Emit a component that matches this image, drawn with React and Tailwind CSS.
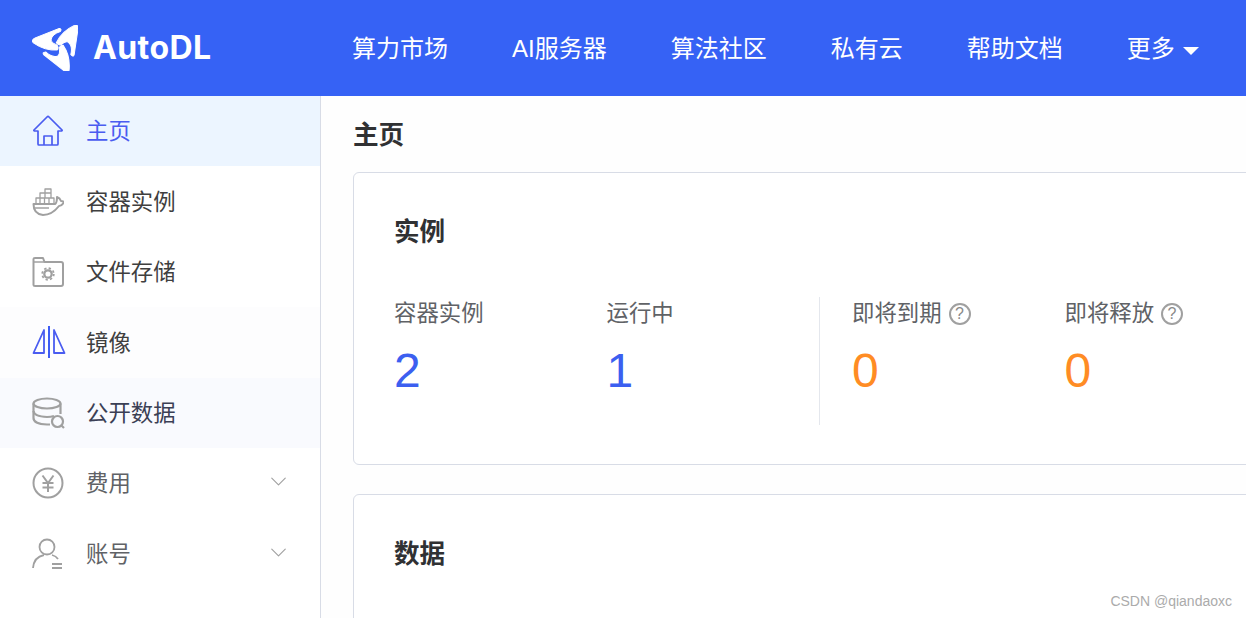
import { ChevronDown } from 'lucide-react';

const FONT = '"Liberation Sans", "Noto Sans CJK SC", sans-serif';

const NAV_ITEMS = ['算力市场', 'AI服务器', '算法社区', '私有云', '帮助文档'];

const BLADE = 'M0 16 Q0.500 14 3 13 L27 3.500 Q30 3 28.500 6.500 Q20 9 19 15 Q19 18 25 20 Q27 22 25.500 25 Q13 26 1.500 18 Q0 17 0 16 Z';

const Logo = () => (
  <svg width="46" height="46" viewBox="0 0 46 46" fill="white" stroke="white" strokeWidth="1" strokeLinejoin="round">
    <path d={BLADE} />
    <path d={BLADE} transform="rotate(120 27 21)" />
    <path d={BLADE} transform="rotate(240 27 21)" />
  </svg>
);

const HomeIcon = () => (
  <svg width="32" height="32" viewBox="0 0 32 32" fill="none" stroke="#4a5cf0" strokeWidth="1.700" strokeLinejoin="round">
    <path d="M2 15 L15 2 Q16 1 17 2 L30 15 Q30.500 16 29 16 L26 16 L26 29 Q26 30 25 30 L7 30 Q6 30 6 29 L6 16 L3 16 Q1.500 16 2 15 Z" />
    <path d="M12 30 V21 H20 V30" />
  </svg>
);

const DockerIcon = () => (
  <svg width="32" height="28" viewBox="0 0 32 28" fill="none" stroke="#a0a0a0" strokeWidth="2" strokeLinejoin="round">
    <path d="M1.500 16 H23 Q25 15 25 9 Q28 10 29 13 Q31 13 32 14 Q30 18 27 18 Q20 27 11 27 Q1.500 26 1.500 16 Z" />
    <path d="M3 20 H17" strokeWidth="1.500" />
    <path d="M4 15 V10 H22 V15 M8 10 V5 H19 V10 M13 5 V1 H19 V5 M8 10 V15 M12.500 10 V15 M17 10 V15 M13 5 V10" strokeWidth="1.300" />
  </svg>
);

const FolderIcon = () => (
  <svg width="32" height="30" viewBox="0 0 32 30" fill="none" stroke="#a0a0a0" strokeWidth="2" strokeLinejoin="round">
    <path d="M1.500 28 V2 Q1.500 1 3 1 H11 L12.500 5 H29 Q31 5 31 7 V27 Q31 29 29 29 H3 Q1.500 29 1.500 28 Z" />
    <path d="M1.500 5 H12.500" strokeWidth="1.500" />
    <circle cx="16" cy="17" r="3.700" strokeWidth="2.300" />
    <circle cx="16" cy="17" r="5.800" strokeWidth="1.800" strokeDasharray="2.300 2.250" />
  </svg>
);

const MirrorIcon = () => (
  <svg width="34" height="34" viewBox="0 0 34 34" fill="none" stroke="#4a5cf0" strokeWidth="1.800" strokeLinejoin="round">
    <path d="M17 1 V33" stroke="#3d5cf5" strokeWidth="2" />
    <path d="M12 5 V28 H1.500 Z" />
    <path d="M22 5 V28 H32.500 Z" />
  </svg>
);

const DataIcon = () => (
  <svg width="34" height="32" viewBox="0 0 34 32" fill="none" stroke="#a0a0a0" strokeWidth="2.200">
    <ellipse cx="15" cy="6.500" rx="13.500" ry="5" />
    <path d="M1.500 6.500 V21 Q1.500 27 15 27.500 H18" />
    <path d="M1.500 14 Q2 19.500 15 20 Q19 20 22 19" />
    <path d="M28.500 6.500 V17" />
    <circle cx="25.500" cy="24.500" r="5.500" />
    <path d="M29.500 28.500 L32 31" />
  </svg>
);

const YenIcon = () => (
  <svg width="32" height="32" viewBox="0 0 32 32" fill="none" stroke="#a0a0a0" strokeWidth="2">
    <circle cx="16" cy="16" r="14.500" />
    <path d="M10.500 8.500 L16 16 L21.500 8.500 M10.500 16 H21.500 M10.500 20.500 H21.500 M16 16 V25" />
  </svg>
);

const UserIcon = () => (
  <svg width="32" height="32" viewBox="0 0 32 32" fill="none" stroke="#a0a0a0" strokeWidth="1.800">
    <circle cx="15" cy="9" r="7.500" />
    <path d="M1 30 Q2 19 12 17 M20 17 Q24 18 26 21" />
    <path d="M20 26 H30 M20 30 H30" />
  </svg>
);

const HelpIcon = () => (
  <span className="ml-[7px] flex h-[22px] w-[22px] items-center justify-center rounded-full border-2 border-[#a0a0a0] text-[16px] text-[#8a8a8a]">
    ?
  </span>
);

const SIDE_ITEMS = [
  { label: '主页', icon: <HomeIcon />, active: true },
  { label: '容器实例', icon: <DockerIcon /> },
  { label: '文件存储', icon: <FolderIcon /> },
  { label: '镜像', icon: <MirrorIcon />, bg: 'bg-[#fdfdfe]' },
  { label: '公开数据', icon: <DataIcon />, bg: 'bg-[#f9fafe]', dark: true },
  { label: '费用', icon: <YenIcon />, sub: true },
  { label: '账号', icon: <UserIcon />, sub: true },
];

const SideItem = ({ item }) => (
  <div
    className={`flex h-[70.4px] items-center pr-[28px] text-[22.4px] ${
      item.active
        ? 'bg-[#ecf5ff] text-[#4a5cf0]'
        : `${item.bg || ''} ${item.sub ? 'text-[#606266]' : item.dark ? 'text-[#3b3f55]' : 'text-[#3f3f3f]'}`
    }`}
  >
    <div className="flex w-[86px] shrink-0 justify-start pl-[32px]">{item.icon}</div>
    <span className="pt-[2px]">{item.label}</span>
    {item.sub && (
      <ChevronDown className="mb-[3px] ml-auto text-[#a0a0a0]" size={27} strokeWidth={1} />
    )}
  </div>
);

const Stat = ({ label, value, color, help }) => (
  <div className="w-[212.5px] shrink-0">
    <div className="flex h-[34px] items-center text-[22.4px] text-[#606266]">
      {label}
      {help && <HelpIcon />}
    </div>
    <div className={`mt-[12px] text-[48px] leading-[56px] ${color}`}>{value}</div>
  </div>
);

export default function App() {
  return (
    <div className="relative flex h-screen flex-col overflow-hidden bg-white" style={{ fontFamily: FONT }}>

      {/* top bar */}
      <header className="flex h-[96px] shrink-0 items-center bg-[#3662f5] pl-[32px] text-white">
        <Logo />
        <span className="ml-[15px] w-[259px] text-[32px] font-bold tracking-[0.4px]" style={{ fontFamily: 'Inter, sans-serif' }}>
          AutoDL
        </span>
        <nav className="flex items-center gap-[64px] pt-[2px] text-[24px]">
          {NAV_ITEMS.map(name => <span key={name}>{name}</span>)}
          <span className="flex items-center">
            更多
            <span className="ml-[8px] mt-[3px] h-0 w-0 border-x-[8px] border-t-[8px] border-x-transparent border-t-white" />
          </span>
        </nav>
      </header>

      <div className="flex min-h-0 flex-1">

        {/* sidebar */}
        <aside className="w-[321px] shrink-0 border-r border-[#d8dce6]">
          {SIDE_ITEMS.map(item => <SideItem key={item.label} item={item} />)}
        </aside>

        {/* main */}
        <main className="min-w-0 flex-1 overflow-hidden bg-[#fefefe] pl-[32px]">
          <h1 className="flex h-[76px] items-center pt-[2px] text-[25.6px] font-bold text-[#303133]">主页</h1>

          <section className="w-[1000px] rounded-[6px] border border-[#d8dce6] bg-white px-[40px] pb-[39px] pt-[41px]">
            <h2 className="text-[25.6px] font-bold leading-[36px] text-[#303133]">实例</h2>
            <div className="mt-[47px] flex h-[128px]">
              <div className="flex w-[426px] border-r border-[#e4e7ed]">
                <Stat label="容器实例" value="2" color="text-[#3c5ff0]" />
                <Stat label="运行中" value="1" color="text-[#3c5ff0]" />
              </div>
              <div className="flex w-[425px] pl-[32px]">
                <Stat label="即将到期" value="0" color="text-[#ff8c24]" help />
                <Stat label="即将释放" value="0" color="text-[#ff8c24]" help />
              </div>
            </div>
          </section>

          <section className="mt-[29px] h-[300px] w-[1000px] rounded-[6px] border border-[#d8dce6] bg-white px-[40px] pt-[41px]">
            <h2 className="text-[25.6px] font-bold leading-[36px] text-[#303133]">数据</h2>
          </section>
        </main>
      </div>

      {/* watermark */}
      <span className="absolute bottom-[6px] right-[14px] text-[14px] text-[#ababab]">CSDN @qiandaoxc</span>
    </div>
  );
}
